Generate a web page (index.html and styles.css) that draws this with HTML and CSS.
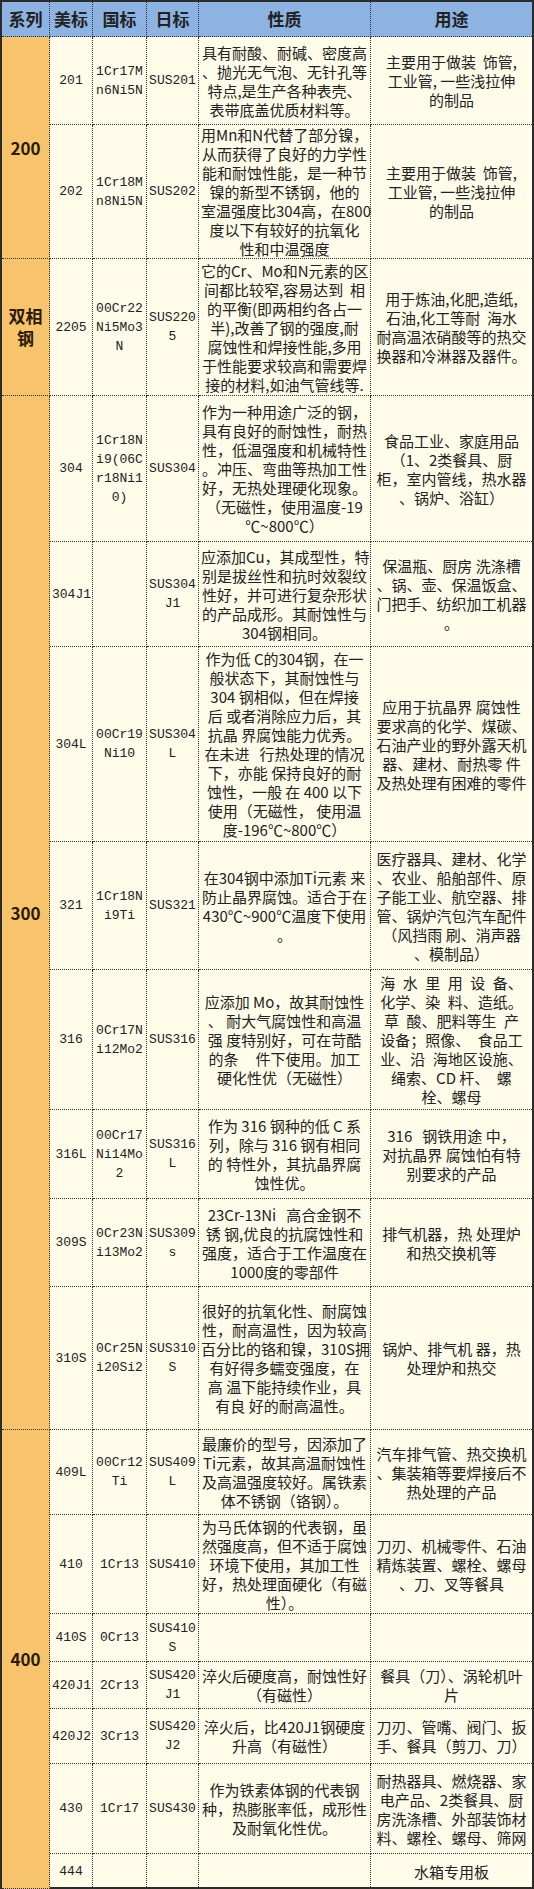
FILE: index.html
```html
<!DOCTYPE html>
<html lang="zh">
<head>
<meta charset="utf-8">
<title>不锈钢牌号对照</title>
<link rel="stylesheet" href="styles.css">
</head>
<body>
<div class="frame">
<table class="steel">
<colgroup>
<col class="c-series"><col class="c-us"><col class="c-gb"><col class="c-jis"><col class="c-prop"><col class="c-use">
</colgroup>
<thead>
<tr class="r-head">
<th class="series-h">系列</th><th>美标</th><th>国标</th><th>日标</th><th>性质</th><th>用途</th>
</tr>
</thead>
<tbody>
<tr class="r201">
<td class="series" rowspan="2">200</td>
<td class="code">201</td>
<td class="code">1Cr17M<br>n6Ni5N</td>
<td class="code">SUS201</td>
<td class="txt">具有耐酸、耐碱、密度高<br>、抛光无气泡、无针孔等<br>特点,是生产各种表壳、<br>表带底盖优质材料等。</td>
<td class="txt">主要用于做装&nbsp; 饰管,<br>工业管, 一些浅拉伸<br>的制品</td>
</tr>
<tr class="r202">
<td class="code">202</td>
<td class="code">1Cr18M<br>n8Ni5N</td>
<td class="code">SUS202</td>
<td class="txt">用Mn和N代替了部分镍，<br>从而获得了良好的力学性<br>能和耐蚀性能，是一种节<br>镍的新型不锈钢，他的<br>室温强度比304高，在800<br>度以下有较好的抗氧化<br>性和中温强度</td>
<td class="txt">主要用于做装&nbsp; 饰管,<br>工业管, 一些浅拉伸<br>的制品</td>
</tr>
<tr class="r2205">
<td class="series"><span class="sline">双相</span><span class="sline">钢</span></td>
<td class="code">2205</td>
<td class="code">00Cr22<br>Ni5Mo3<br>N</td>
<td class="code">SUS220<br>5</td>
<td class="txt">它的Cr、Mo和N元素的区<br>间都比较窄,容易达到&nbsp; 相<br>的平衡(即两相约各占一<br>半),改善了钢的强度,耐<br>腐蚀性和焊接性能,多用<br>于性能要求较高和需要焊<br>接的材料,如油气管线等.</td>
<td class="txt">用于炼油,化肥,造纸,<br>石油,化工等耐&nbsp; 海水<br>耐高温浓硝酸等的热交<br>换器和冷淋器及器件。</td>
</tr>
<tr class="r304">
<td class="series" rowspan="8">300</td>
<td class="code">304</td>
<td class="code">1Cr18N<br>i9(06C<br>r18Ni1<br>0)</td>
<td class="code">SUS304</td>
<td class="txt">作为一种用途广泛的钢，<br>具有良好的耐蚀性，耐热<br>性，低温强度和机械特性<br>。冲压、弯曲等热加工性<br>好，无热处理硬化现象。<br>（无磁性，使用温度-19<br>℃~800℃）</td>
<td class="txt">食品工业、家庭用品<br>（1、2类餐具、厨<br>柜，室内管线，热水器<br>、锅炉、浴缸）</td>
</tr>
<tr class="r304j1">
<td class="code">304J1</td>
<td class="code"></td>
<td class="code">SUS304<br>J1</td>
<td class="txt">应添加Cu，其成型性，特<br>别是拔丝性和抗时效裂纹<br>性好，并可进行复杂形状<br>的产品成形。其耐蚀性与<br>304钢相同。</td>
<td class="txt">保温瓶、厨房 洗涤槽<br>、锅、壶、保温饭盒、<br>门把手、纺织加工机器<br>。</td>
</tr>
<tr class="r304l">
<td class="code">304L</td>
<td class="code">00Cr19<br>Ni10</td>
<td class="code">SUS304<br>L</td>
<td class="txt">作为低 C的304钢，在一<br>般状态下，其耐蚀性与<br>304 钢相似，但在焊接<br>后 或者消除应力后，其<br>抗晶 界腐蚀能力优秀。<br>在未进&nbsp;&nbsp; 行热处理的情况<br>下，亦能 保持良好的耐<br>蚀性，一般 在 400 以下<br>使用（无磁性， 使用温<br>度-196℃~800℃）</td>
<td class="txt">应用于抗晶界 腐蚀性<br>要求高的化学、煤碳、<br>石油产业的野外露天机<br>器、建材、耐热零 件<br>及热处理有困难的零件</td>
</tr>
<tr class="r321">
<td class="code">321</td>
<td class="code">1Cr18N<br>i9Ti</td>
<td class="code">SUS321</td>
<td class="txt">在304钢中添加Ti元素 来<br>防止晶界腐蚀。适合于在<br>430℃~900℃温度下使用<br>。</td>
<td class="txt">医疗器具、建材、化学<br>、农业、船舶部件、原<br>子能工业、航空器、排<br>管、锅炉汽包汽车配件<br>（风挡雨 刷、消声器<br>、模制品）</td>
</tr>
<tr class="r316">
<td class="code">316</td>
<td class="code">0Cr17N<br>i12Mo2</td>
<td class="code">SUS316</td>
<td class="txt">应添加 Mo，故其耐蚀性<br>、 耐大气腐蚀性和高温<br>强 度特别好，可在苛酷<br>的条&nbsp;&nbsp;&nbsp;&nbsp; 件下使用。加工<br>硬化性优（无磁性）</td>
<td class="txt">海&ensp;水&ensp;里&ensp;用&ensp;设&ensp;备、<br>化学、染&ensp;料、造纸。<br>草&ensp;酸、肥料等生&ensp;产<br>设备；照像、&ensp;食品工<br>业、沿&ensp;海地区设施、<br>绳索、CD 杆、&ensp;螺<br>栓、螺母</td>
</tr>
<tr class="r316l">
<td class="code">316L</td>
<td class="code">00Cr17<br>Ni14Mo<br>2</td>
<td class="code">SUS316<br>L</td>
<td class="txt">作为 316 钢种的低 C 系<br>列，除与 316 钢有相同<br>的 特性外，其抗晶界腐<br>蚀性优。</td>
<td class="txt">316&nbsp;&nbsp; 钢铁用途 中，<br>对抗晶界 腐蚀怕有特<br>别要求的产品</td>
</tr>
<tr class="r309s">
<td class="code">309S</td>
<td class="code">0Cr23N<br>i13Mo2</td>
<td class="code">SUS309<br>s</td>
<td class="txt">23Cr-13Ni&nbsp;&nbsp; 高合金钢不<br>锈 钢,优良的抗腐蚀性和<br>强度，适合于工作温度在<br>1000度的零部件</td>
<td class="txt">排气机器，热 处理炉<br>和热交换机等</td>
</tr>
<tr class="r310s">
<td class="code">310S</td>
<td class="code">0Cr25N<br>i20Si2</td>
<td class="code">SUS310<br>S</td>
<td class="txt">很好的抗氧化性、耐腐蚀<br>性，耐高温性，因为较高<br>百分比的铬和镍，310S拥<br>有好得多蠕变强度，在<br>高 温下能持续作业，具<br>有良 好的耐高温性。</td>
<td class="txt">锅炉、排气机 器，热<br>处理炉和热交</td>
</tr>
<tr class="r409l">
<td class="series" rowspan="7">400</td>
<td class="code">409L</td>
<td class="code">00Cr12<br>Ti</td>
<td class="code">SUS409<br>L</td>
<td class="txt">最廉价的型号，因添加了<br>Ti元素，故其高温耐蚀性<br>及高温强度较好。属铁素<br>体不锈钢（铬钢）。</td>
<td class="txt">汽车排气管、热交换机<br>、集装箱等要焊接后不<br>热处理的产品</td>
</tr>
<tr class="r410">
<td class="code">410</td>
<td class="code">1Cr13</td>
<td class="code">SUS410</td>
<td class="txt">为马氏体钢的代表钢，虽<br>然强度高，但不适于腐蚀<br>环境下使用，其加工性<br>好，热处理面硬化（有磁<br>性）。</td>
<td class="txt">刀刃、机械零件、石油<br>精炼装置、螺栓、螺母<br>、刀、叉等餐具</td>
</tr>
<tr class="r410s">
<td class="code">410S</td>
<td class="code">0Cr13</td>
<td class="code">SUS410<br>S</td>
<td class="txt"></td>
<td class="txt"></td>
</tr>
<tr class="r420j1">
<td class="code">420J1</td>
<td class="code">2Cr13</td>
<td class="code">SUS420<br>J1</td>
<td class="txt">淬火后硬度高，耐蚀性好<br>（有磁性）</td>
<td class="txt">餐具（刀）、涡轮机叶<br>片</td>
</tr>
<tr class="r420j2">
<td class="code">420J2</td>
<td class="code">3Cr13</td>
<td class="code">SUS420<br>J2</td>
<td class="txt">淬火后，比420J1钢硬度<br>升高（有磁性）</td>
<td class="txt">刀刃、管嘴、阀门、扳<br>手、餐具（剪刀、刀）</td>
</tr>
<tr class="r430">
<td class="code">430</td>
<td class="code">1Cr17</td>
<td class="code">SUS430</td>
<td class="txt">作为铁素体钢的代表钢<br>种，热膨胀率低，成形性<br>及耐氧化性优。</td>
<td class="txt">耐热器具、燃烧器、家<br>电产品、2类餐具、厨<br>房洗涤槽、外部装饰材<br>料、螺栓、螺母、筛网</td>
</tr>
<tr class="r444 last">
<td class="code">444</td>
<td class="code"></td>
<td class="code"></td>
<td class="txt"></td>
<td class="txt">水箱专用板</td>
</tr>
</tbody>
</table>
</div>
</body>
</html>
```

FILE: styles.css
```css
html, body {
  margin: 0;
  padding: 0;
  background: #ffffff;
}

.frame {
  width: 534px;
  height: 1889px;
  box-sizing: border-box;
  border: 2px solid #2b2b2b;
  background: #fffce9;
}

.steel {
  width: 530px;
  table-layout: fixed;
  border-collapse: separate;
  border-spacing: 0;
  font-family: "Noto Sans CJK SC", "Liberation Sans", sans-serif;
  color: #222;
}

.c-series { width: 48px; }
.c-us { width: 43px; }
.c-gb { width: 54px; }
.c-jis { width: 52px; }
.c-prop { width: 172px; }
.c-use { width: 161px; }

.steel th,
.steel td {
  padding: 0 2px;
  box-sizing: border-box;
  border-right: 1px dotted #333;
  border-bottom: 1px dotted #333;
  text-align: center;
  vertical-align: middle;
  overflow: visible;
}

.steel th:last-child,
.steel td:last-child {
  border-right: 0;
}

.last td {
  border-bottom: 0;
}

.steel th {
  background: #8db3e2;
  font-size: 17px;
  font-weight: 700;
  line-height: 20px;
}

.series {
  background: #f7c46c;
  font-size: 17px;
  font-weight: 700;
  line-height: 20px;
  color: #2a1a08;
}

.sline {
  display: block;
  line-height: 22px;
}

.code {
  font-family: "Liberation Mono", "Noto Sans CJK SC", monospace;
  font-size: 13px;
  line-height: 19px;
  white-space: nowrap;
  padding: 0 1px;
}

.txt {
  font-size: 15px;
  line-height: 19px;
  white-space: nowrap;
}

.r-head { height: 35px; }
.r201 { height: 88px; }
.r202 { height: 132px; }
.r2205 { height: 137px; }
.r304 { height: 146px; }
.r304j1 { height: 105px; }
.r304l { height: 195px; }
.r321 { height: 128px; }
.r316 { height: 140px; }
.r316l { height: 89px; }
.r309s { height: 88px; }
.r310s { height: 143px; }
.r409l { height: 85px; }
.r410 { height: 99px; }
.r410s { height: 48px; }
.r420j1 { height: 47px; }
.r420j2 { height: 55px; }
.r430 { height: 90px; }
.r444 { height: 35px; }
```
